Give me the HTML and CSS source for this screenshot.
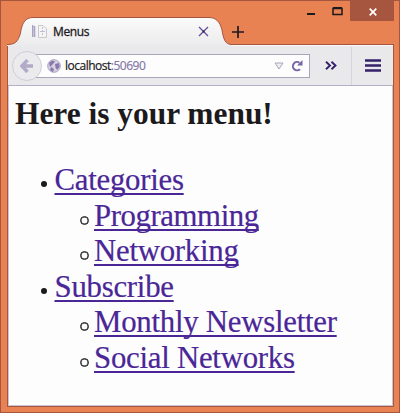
FILE: index.html
```html
<!DOCTYPE html>
<html lang="en">
<head>
<meta charset="utf-8">
<title>Menus</title>
<link rel="stylesheet" href="styles.css">
</head>
<body>
<div class="window">
  <header class="titlebar">
    <div class="tab">
      <svg class="tab-shape" width="228" height="30" viewBox="0 0 228 30">
        <defs><linearGradient id="g" x1="0" y1="0" x2="0" y2="1"><stop offset="0" stop-color="#fbfbfb"/><stop offset="1" stop-color="#ebebed"/></linearGradient></defs>
        <path d="M1 27.500C9 27.500 12 25 14.500 16C16 5 20 .5 27 .5H203C210 .5 214 5 216 13C217.500 22 219 27.500 226 27.500V29H1Z" fill="url(#g)"/>
        <path d="M1 27.500C9 27.500 12 25 14.500 16C16 5 20 .5 27 .5H203C210 .5 214 5 216 13C217.500 22 219 27.500 226 27.500" fill="none" stroke="#a6553f"/>
      </svg>
      <svg class="favicon" width="16" height="15" viewBox="0 0 16 15"><path d="M.5 1V13M2.500 2V13" stroke="#a9a2c2" stroke-width="1.600"/><path d="M6.500 1.500H11L14.500 5V13.500H6.500Z" fill="#f5f5f6" stroke="#c8c8cd"/><path d="M10.500 3V11M8 7.500H14" stroke="#c3bdd2" stroke-dasharray="2 1"/></svg>
      <span class="tab-title">Menus</span>
      <svg class="tab-close" width="11" height="11" viewBox="0 0 11 11"><path d="M1 1L10 10M10 1L1 10" stroke="#644c99" stroke-width="1.300"/><circle cx="5.500" cy="5.500" r="1" fill="#211c38"/></svg>
    </div>
    <svg class="new-tab" width="12" height="12" viewBox="0 0 12 12"><path d="M6 0V12M0 6H12" stroke="#1c1a22" stroke-width="1.700"/></svg>
    <div class="controls">
      <svg width="8" height="13" viewBox="0 0 8 13"><path d="M0 8H8" stroke="#1d1a1c" stroke-width="2"/></svg>
      <svg width="11" height="13" viewBox="0 0 11 13"><path d="M1 2.500H10V8.500H1Z" fill="none" stroke="#1d1a1c" stroke-width="1.500"/><path d="M1 2H10" stroke="#1d1a1c" stroke-width="2"/></svg>
      <div class="close"><svg width="8" height="8" viewBox="0 0 8 8"><path d="M.7 .7L7.300 7.300M7.300 .7L.7 7.300" stroke="#fff" stroke-width="1.700"/></svg></div>
    </div>
  </header>
  <div class="frame">
    <nav class="toolbar">
      <div class="back"><svg width="14" height="14" viewBox="0 0 14 14"><path d="M7.500 1L2 7L7.500 13M2 7H13" fill="none" stroke="#b3aac8" stroke-width="3.500"/></svg></div>
      <div class="address">
        <svg width="14" height="14" viewBox="0 0 14 14"><circle cx="7" cy="7" r="6.300" fill="#d5d1e1" stroke="#aaa2c1"/><path d="M2 4L5 1.500L8 2.500L6 5L3 8ZM8 5L12 4L12.500 8L10 11L8.500 8.500ZM4 8L7 10L6 13L3 11Z" fill="#8878ad"/></svg>
        <span class="url">localhost<i>:50690</i></span>
        <svg class="drop" width="10" height="8" viewBox="0 0 10 8"><path d="M1 1H9L5 7Z" fill="#eee" stroke="#aaa4bd"/></svg>
        <svg width="12" height="12" viewBox="0 0 12 12"><path d="M9 9.200A4.200 4.200 0 1 1 8.500 2.700" fill="none" stroke="#7764a6" stroke-width="2"/><path d="M11.500 0V5.500H6Z" fill="#7764a6"/></svg>
      </div>
      <svg class="more" width="12" height="9" viewBox="0 0 12 9"><path d="M1 .7L5 4.500L1 8.300M6.500 .7L10.500 4.500L6.500 8.300" fill="none" stroke="#35206a" stroke-width="1.900"/></svg>
      <span class="divider"></span>
      <svg class="menu" width="16" height="13" viewBox="0 0 16 13"><path d="M0 1.500H16M0 6.500H16M0 11.500H16" stroke="#35206a" stroke-width="2.700"/></svg>
    </nav>
    <main>
      <h1>Here is your menu!</h1>
      <ul>
        <li><a>Categories</a>
          <ul><li><a class="tight">Programming</a></li><li><a>Networking</a></li></ul>
        </li>
        <li><a>Subscribe</a>
          <ul><li><a>Monthly Newsletter</a></li><li><a>Social Networks</a></li></ul>
        </li>
      </ul>
    </main>
  </div>
</div>
</body>
</html>
```
FILE: styles.css
```css
* { box-sizing: border-box; }
body { margin: 0; }
svg { display: block; flex: none; }
.window {
  width: 400px; height: 413px; overflow: hidden;
  display: flex; flex-direction: column;
  padding: 0 5px 5px 6px;
  background: #e88253;
  border: 1px solid #a6553f;
  font-family: "Open Sans", sans-serif;
}
.titlebar { height: 43px; flex: none; display: flex; align-items: flex-start; }
.tab { position: relative; z-index: 1; width: 224px; height: 28px; margin-top: 16px; display: flex; align-items: center; padding-left: 25px; }
.tab-shape { position: absolute; left: -1px; top: 0; }
.favicon, .tab-title, .tab-close { position: relative; }
.tab-title { margin-left: 5px; margin-top: 2px; font-size: 12px; line-height: 16px; letter-spacing: -.4px; color: #1c1a20; -webkit-text-stroke: .3px #1c1a20; }
.tab-close { margin-left: auto; margin-right: 22px; margin-top: 1px; }
.new-tab { margin: 25px 0 0 1px; }
.controls { margin-left: auto; display: flex; }
.controls > svg { margin-top: 5px; margin-right: 17px; }
.controls > svg + svg { margin-right: 7px; }
.close { width: 44px; height: 20px; padding: 2px 0 0 1px; display: flex; align-items: center; justify-content: center; background: #a6553f; }
.frame { flex: 1; display: flex; flex-direction: column; border: 1px solid #a6553f; background: #fdfdfd; box-shadow: inset 0 0 0 1px #c9c4d6; }
.toolbar { height: 41px; flex: none; display: flex; align-items: center; padding: 0 12px 0 4px; background: #e9e9eb; border-bottom: 1px solid #b5afc6; border-top: 1px solid #f8f8f8; }
.back { position: relative; z-index: 1; width: 30px; height: 30px; border-radius: 50%; border: 1px solid #cfcdd7; background: #ebebed; display: flex; align-items: center; justify-content: center; }
.address { width: 281px; height: 24px; margin-left: -13px; padding: 0 6px 0 17px; display: flex; align-items: center; background: #fdfdfd; border: 1px solid #aaa4bd; }
.url { margin-left: 4px; font-size: 12px; line-height: 16px; letter-spacing: -.5px; color: #1c1a20; -webkit-text-stroke: .2px; }
.url i { font-style: normal; color: #8578a8; }
.drop { margin-left: auto; margin-right: 7px; }
.more { margin-left: 15px; }
.divider { width: 1px; height: 38px; margin-left: 14px; background: #d6d4dc; }
.menu { margin-left: auto; }
main { padding: 0 0 0 7px; font-family: "Liberation Serif", serif; }
h1 { margin: 10px 0 0; font-size: 31.400px; line-height: 36px; color: #1c1a1c; white-space: nowrap; }
ul { margin: 0; padding-left: 39.500px; list-style: none; font-size: 30.800px; line-height: 35.500px; letter-spacing: -.25px; color: #1c1a1c; }
main > ul { margin-top: 31px; }
li { position: relative; white-space: nowrap; }
li::before { content: ""; position: absolute; left: -14px; top: 18px; width: 6px; height: 6px; border-radius: 50%; background: #1c1a1c; }
ul ul li::before { left: -14px; top: 17px; width: 7px; height: 7px; border: 1px solid #1c1a1c; box-shadow: inset 0 0 0 .5px #1c1a1c; background: none; }
a { color: #4a2697; text-decoration: underline; text-decoration-thickness: 2px; text-underline-offset: 3px; text-decoration-skip-ink: none; -webkit-text-stroke: .2px; }
.tight { letter-spacing: -.42px; }
```
